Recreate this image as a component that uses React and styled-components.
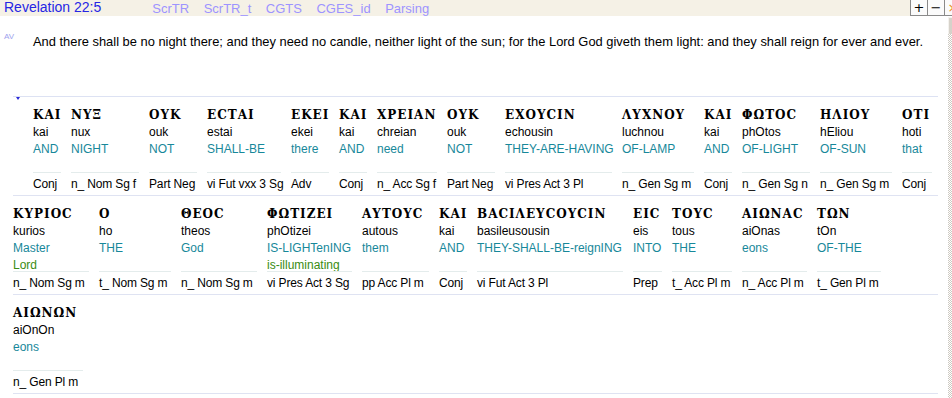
import React from 'react';
import styled, { createGlobalStyle } from 'styled-components';

const GlobalStyle = createGlobalStyle`
  html, body {
    margin: 0;
    padding: 0;
    background: #fff;
    overflow: hidden;
  }
  body {
    font-family: "Liberation Sans", Arial, sans-serif;
  }
`;

const verse =
  'And there shall be no night there; and they need no candle, neither light of the sun; for the Lord God giveth them light: and they shall reign for ever and ever.';

const links = ['ScrTR', 'ScrTR_t', 'CGTS', 'CGES_id', 'Parsing'];

// one entry per printed line of the interlinear, widths follow the columns
const rows = [
  {
    indent: true,
    words: [
      { g: 'ΚΑΙ', t: 'kai', gl: ['AND'], p: 'Conj', w: 28 },
      { g: 'ΝΥΞ', t: 'nux', gl: ['NIGHT'], p: 'n_ Nom Sg f', w: 68 },
      { g: 'ΟΥΚ', t: 'ouk', gl: ['NOT'], p: 'Part Neg', w: 48 },
      { g: 'ΕϹΤΑΙ', t: 'estai', gl: ['SHALL-BE'], p: 'vi Fut vxx 3 Sg', w: 74 },
      { g: 'ΕΚΕΙ', t: 'ekei', gl: ['there'], p: 'Adv', w: 38 },
      { g: 'ΚΑΙ', t: 'kai', gl: ['AND'], p: 'Conj', w: 28 },
      { g: 'ΧΡΕΙΑΝ', t: 'chreian', gl: ['need'], p: 'n_ Acc Sg f', w: 60 },
      { g: 'ΟΥΚ', t: 'ouk', gl: ['NOT'], p: 'Part Neg', w: 48 },
      { g: 'ΕΧΟΥϹΙΝ', t: 'echousin', gl: ['THEY-ARE-HAVING'], p: 'vi Pres Act 3 Pl', w: 107 },
      { g: 'ΛΥΧΝΟΥ', t: 'luchnou', gl: ['OF-LAMP'], p: 'n_ Gen Sg m', w: 72 },
      { g: 'ΚΑΙ', t: 'kai', gl: ['AND'], p: 'Conj', w: 28 },
      { g: 'ΦΩΤΟϹ', t: 'phOtos', gl: ['OF-LIGHT'], p: 'n_ Gen Sg n', w: 68 },
      { g: 'ΗΛΙΟΥ', t: 'hEliou', gl: ['OF-SUN'], p: 'n_ Gen Sg m', w: 72 },
      { g: 'ΟΤΙ', t: 'hoti', gl: ['that'], p: 'Conj', w: 30 },
    ],
  },
  {
    words: [
      { g: 'ΚΥΡΙΟϹ', t: 'kurios', gl: ['Master', 'Lord'], p: 'n_ Nom Sg m', w: 76 },
      { g: 'Ο', t: 'ho', gl: ['THE'], p: 't_ Nom Sg m', w: 72 },
      { g: 'ΘΕΟϹ', t: 'theos', gl: ['God'], p: 'n_ Nom Sg m', w: 76 },
      { g: 'ΦΩΤΙΖΕΙ', t: 'phOtizei', gl: ['IS-LIGHTenING', 'is-illuminating'], p: 'vi Pres Act 3 Sg', w: 85 },
      { g: 'ΑΥΤΟΥϹ', t: 'autous', gl: ['them'], p: 'pp Acc Pl m', w: 67 },
      { g: 'ΚΑΙ', t: 'kai', gl: ['AND'], p: 'Conj', w: 28 },
      { g: 'ΒΑϹΙΛΕΥϹΟΥϹΙΝ', t: 'basileusousin', gl: ['THEY-SHALL-BE-reignING'], p: 'vi Fut Act 3 Pl', w: 146 },
      { g: 'ΕΙϹ', t: 'eis', gl: ['INTO'], p: 'Prep', w: 29 },
      { g: 'ΤΟΥϹ', t: 'tous', gl: ['THE'], p: 't_ Acc Pl m', w: 60 },
      { g: 'ΑΙΩΝΑϹ', t: 'aiOnas', gl: ['eons'], p: 'n_ Acc Pl m', w: 65 },
      { g: 'ΤΩΝ', t: 'tOn', gl: ['OF-THE'], p: 't_ Gen Pl m', w: 64 },
    ],
  },
  {
    words: [{ g: 'ΑΙΩΝΩΝ', t: 'aiOnOn', gl: ['eons'], p: 'n_ Gen Pl m', w: 70 }],
  },
];

const App = () => {
  return (
    <Page>
      <GlobalStyle />
      <Header>
        <Title>Revelation 22:5</Title>
        <Links>
          {links.map((l) => (
            <HeadLink key={l}>{l}</HeadLink>
          ))}
        </Links>
        <WinButtons>
          <WinBtn>+</WinBtn>
          <WinBtn>−</WinBtn>
          <WinBtn $close>×</WinBtn>
        </WinButtons>
      </Header>
      <Body>
        <Main>
          <Verse>
            <VersionTag>AV</VersionTag>
            <VerseText>{verse}</VerseText>
          </Verse>
          <Interlinear>
            {rows.map((row, i) => (
              <Row key={i} $indent={row.indent}>
                {row.words.map((wd, j) => (
                  <Word key={j} $w={wd.w}>
                    <Greek>{wd.g}</Greek>
                    <Translit>{wd.t}</Translit>
                    <Gloss>
                      {wd.gl.map((g, k) => (
                        <GlossLine key={k} $alt={k > 0}>
                          {g}
                        </GlossLine>
                      ))}
                    </Gloss>
                    <Parse>{wd.p}</Parse>
                  </Word>
                ))}
              </Row>
            ))}
          </Interlinear>
        </Main>
        <Scrollbar>
          <Thumb />
        </Scrollbar>
      </Body>
    </Page>
  );
};

const Page = styled.div`
  width: 952px;
  height: 398px;
  display: flex;
  flex-direction: column;
  overflow: hidden;
  background: #fff;
`;

const Header = styled.div`
  height: 16px;
  flex-shrink: 0;
  display: flex;
  align-items: flex-start;
  padding-left: 4px;
  background: #f5f1e6;
`;

const Title = styled.div`
  font-size: 14px;
  line-height: 15px;
  color: #2626e4;
  white-space: nowrap;
`;

const Links = styled.div`
  display: flex;
  gap: 14.5px;
  margin-left: 51px;
`;

const HeadLink = styled.span`
  font-size: 13px;
  line-height: 15px;
  padding-top: 0.5px;
  color: #9d94ff;
  cursor: pointer;
`;

const WinButtons = styled.div`
  display: flex;
  margin-left: auto;
  margin-right: -4px;
  width: 46px;
  overflow: hidden;
`;

const WinBtn = styled.div`
  box-sizing: border-box;
  flex-shrink: 0;
  width: 18px;
  height: 16px;
  border: 1px solid #8a8a8a;
  border-top: none;
  margin-left: -1px;
  background: #fbfbfb;
  display: flex;
  align-items: center;
  justify-content: center;
  font-family: "DejaVu Sans", sans-serif;
  font-size: 13px;
  line-height: 1;
  color: ${(p) => (p.$close ? '#e8901a' : '#000')};

  &:first-child {
    margin-left: 0;
  }
`;

const Body = styled.div`
  flex: 1;
  display: flex;
  min-height: 0;
`;

const Main = styled.div`
  flex: 1;
  min-width: 0;
`;

const Verse = styled.div`
  height: 80px;
  box-sizing: border-box;
  display: flex;
  align-items: flex-start;
  padding: 18px 0 0 4px;
`;

const VersionTag = styled.span`
  width: 29px;
  flex-shrink: 0;
  font-size: 8px;
  line-height: 8px;
  margin-top: -1px;
  color: #9ea2ee;
`;

const VerseText = styled.div`
  font-size: 12.9px;
  line-height: 15px;
  color: #000;
  white-space: nowrap;
`;

const Interlinear = styled.div`
  position: relative;
  margin-left: 13px;
  width: 925px;
  border-top: 1px solid #dde2f3;

  &::before {
    content: '';
    position: absolute;
    left: 3px;
    top: 0;
    border-left: 2.5px solid transparent;
    border-right: 2.5px solid transparent;
    border-top: 3px solid #2a2ad8;
  }
`;

const Row = styled.div`
  display: flex;
  padding-left: ${(p) => (p.$indent ? '20px' : '0')};
  border-bottom: 1px solid #dfe3f2;
`;

const Word = styled.div`
  width: ${(p) => p.$w}px;
  flex-shrink: 0;
  margin-right: 10px;
  display: flex;
  flex-direction: column;
  white-space: nowrap;
  font-size: 12px;
`;

const Greek = styled.div`
  padding-top: 10px;
  font-family: "DejaVu Serif", serif;
  font-weight: bold;
  font-size: 12px;
  line-height: 17px;
  letter-spacing: 1px;
  color: #000;
`;

const Translit = styled.div`
  line-height: 17px;
  color: #000;
`;

const Gloss = styled.div`
  height: 31px;
`;

const GlossLine = styled.div`
  line-height: 16.5px;
  color: ${(p) => (p.$alt ? '#3b8c12' : '#17889a')};
`;

const Parse = styled.div`
  border-top: 1px solid #e4ecec;
  padding: 3px 0 2px;
  line-height: 17px;
  letter-spacing: -0.15px;
  color: #000;
`;

const Scrollbar = styled.div`
  width: 4px;
  margin-top: 1px;
  flex-shrink: 0;
  background: repeating-conic-gradient(#cdc9c1 0 25%, #fff 0 50%) 0 0 / 2px 2px;
`;

const Thumb = styled.div`
  height: 17px;
  background: #d6d2ca;
  border-left: 1px solid #f4f2ee;
  border-top: 1px solid #f4f2ee;
  box-sizing: border-box;
`;

export default App;
